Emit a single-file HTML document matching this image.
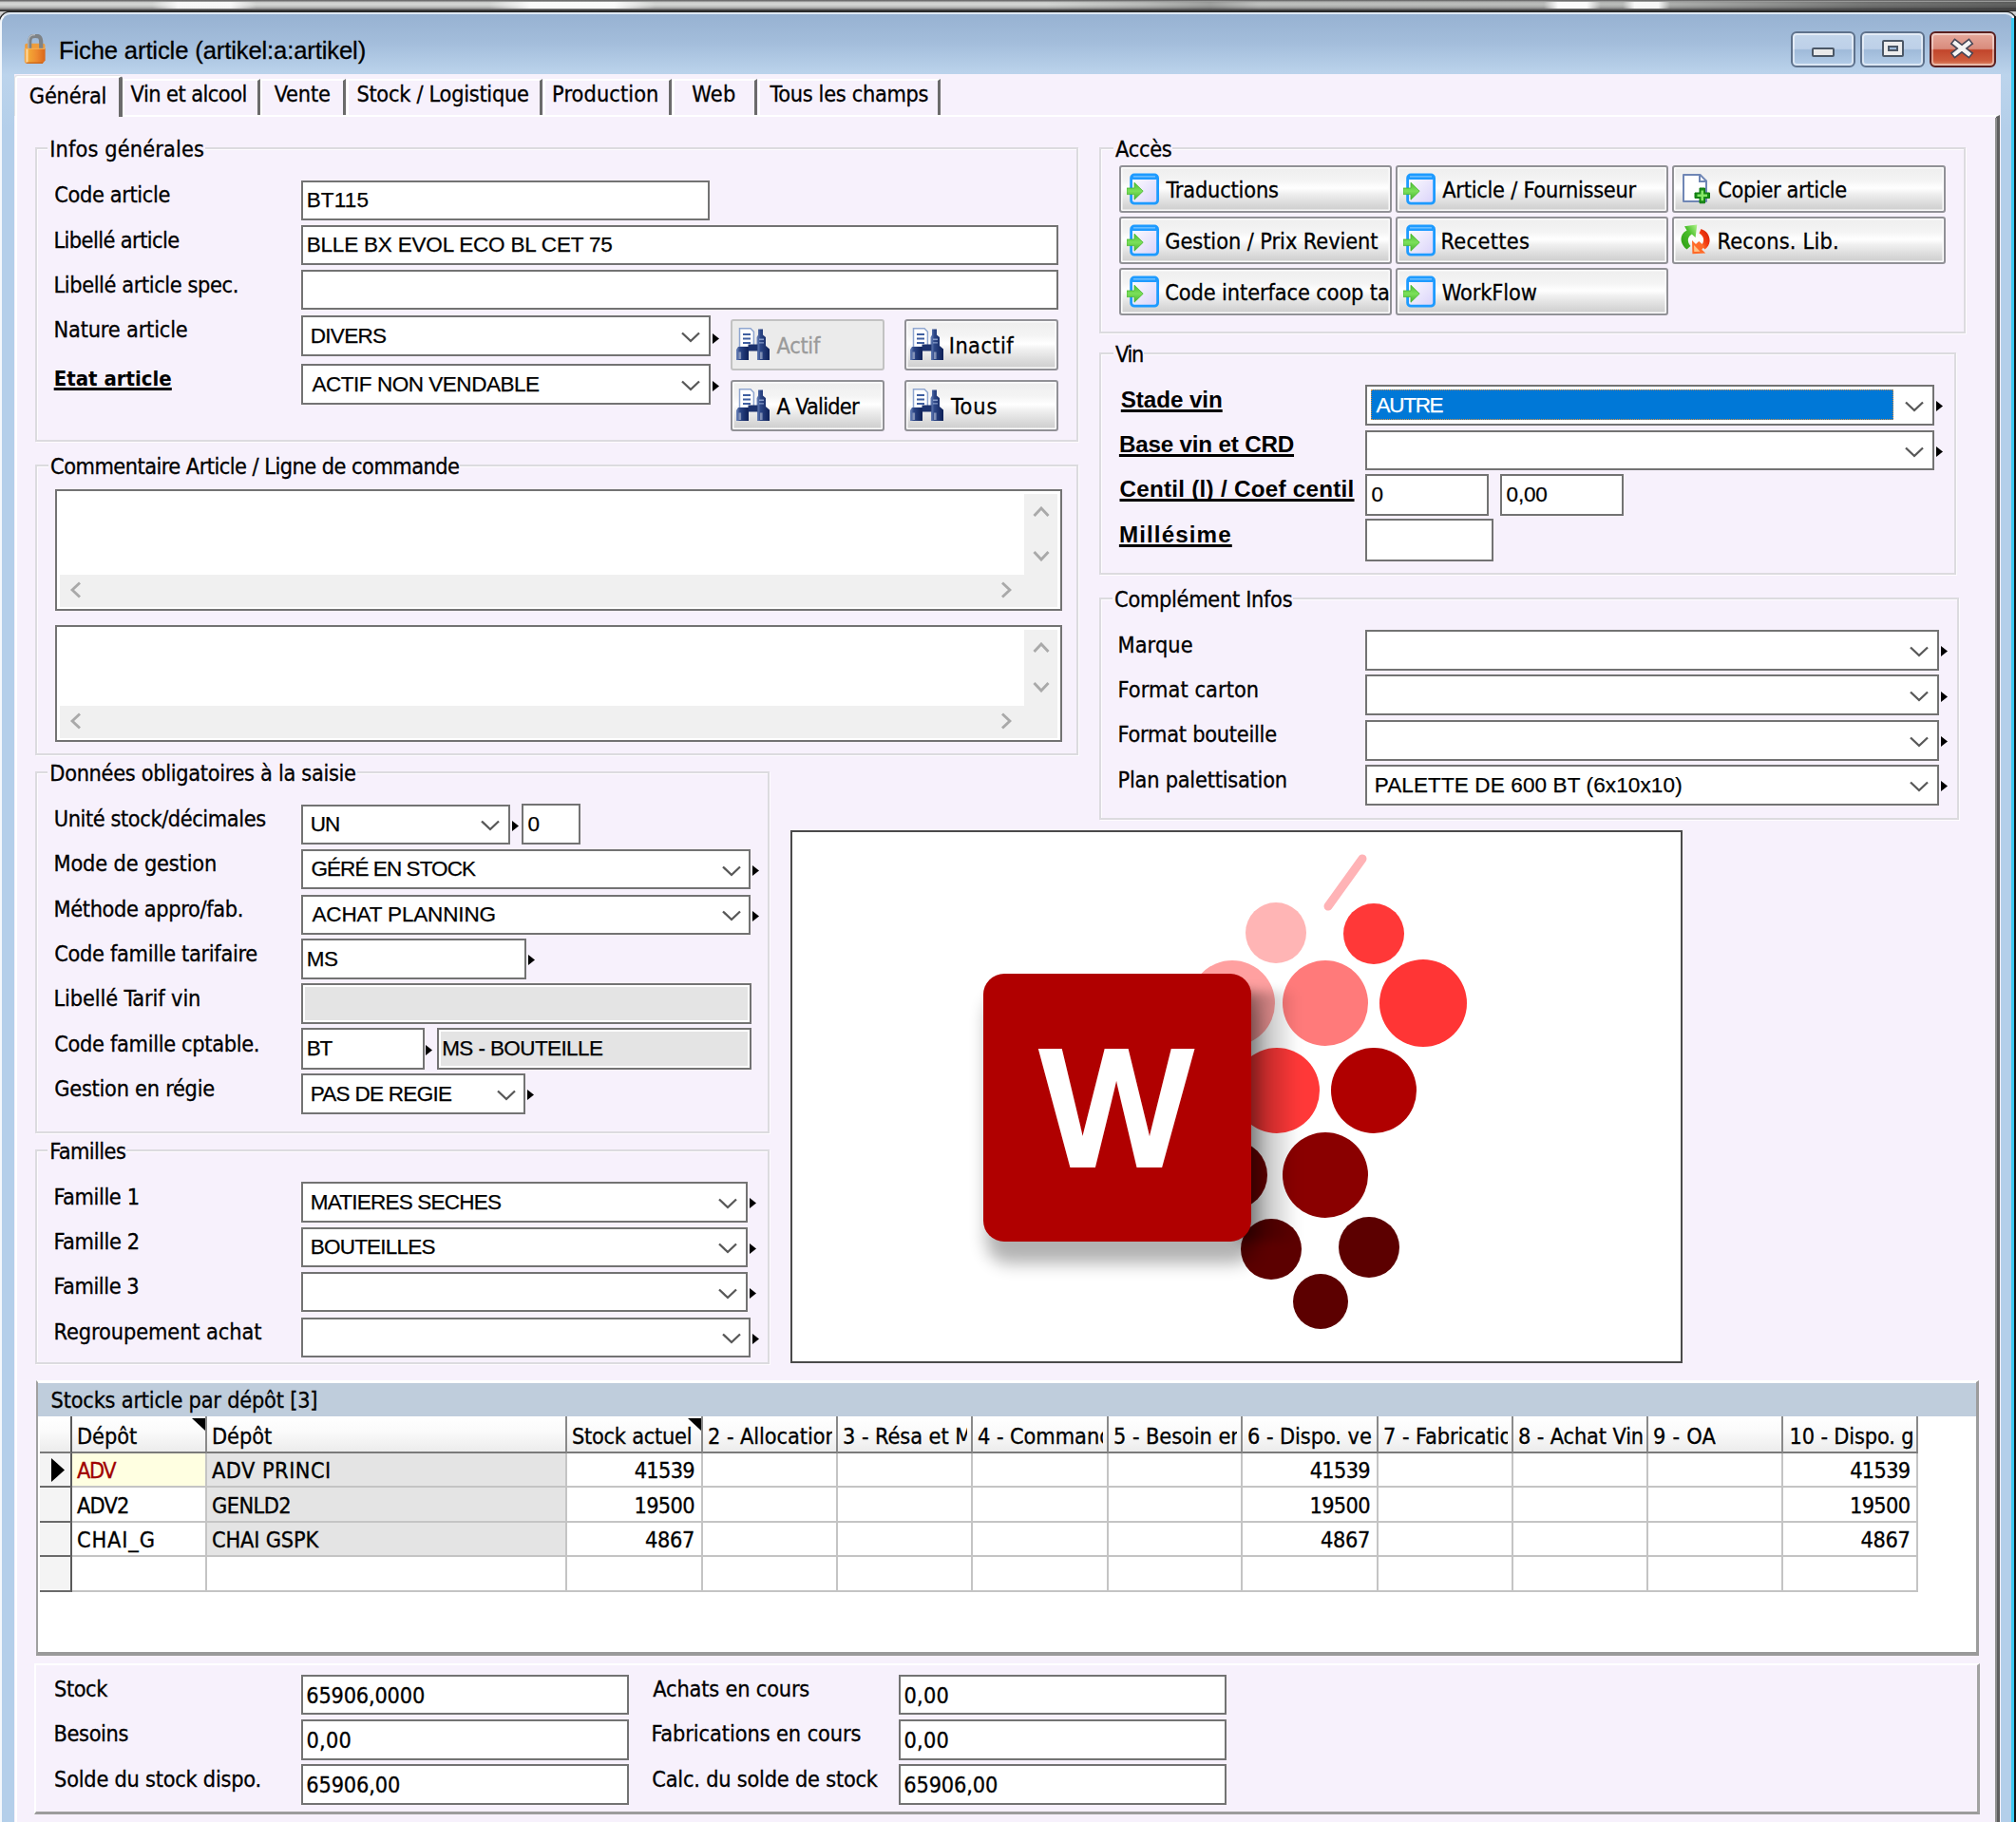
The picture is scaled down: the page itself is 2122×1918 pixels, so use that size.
<!DOCTYPE html>
<html><head><meta charset="utf-8"><title>Fiche article</title>
<style>
html,body{margin:0;padding:0;}
body{width:2122px;height:1918px;overflow:hidden;position:relative;background:#cfcfcf;font-family:'DejaVu Sans Condensed','DejaVu Sans','Liberation Sans',sans-serif;color:#000;}
div,span,svg{box-sizing:border-box;}
#root>div,#root>svg{position:absolute;}
.t{white-space:nowrap;color:#000;}
.inp{border:2px solid #737373;overflow:hidden;}
.iv{position:absolute;left:2.5px;top:0;font:22.5px 'Liberation Sans',sans-serif;white-space:nowrap;color:#000;-webkit-text-stroke:0.25px;}
.sel{position:absolute;background:#0078d7;outline:1px dotted #d89040;outline-offset:-1px;}
.chev{display:block;}
.grp{border:2px solid #dcdbdf;box-shadow:1px 1px 0 rgba(255,255,255,.8), inset 1px 1px 0 rgba(255,255,255,.8);}
.btn{border:2px solid #919196;border-radius:3px;background:linear-gradient(#eeeeee 0%,#f4f4f4 30%,#ffffff 48%,#f0f0f0 60%,#d9d9d9 85%,#cdcdcd 100%);box-shadow:inset 0 0 0 1.5px #fcfcfc;overflow:hidden;}
.btn.dis{background:#ebebeb;border-color:#c2c2c2;box-shadow:none;}
.btn.dis .bt{color:#9a9a9a;}
.bi{position:absolute;left:5.8px;top:50%;margin-top:-18px;height:36px;}
.bi svg{display:block;}
.bt{position:absolute;top:0;font:condensed 23.3px 'DejaVu Sans Condensed','DejaVu Sans','Liberation Sans',sans-serif;letter-spacing:-0.45px;-webkit-text-stroke:0.3px;white-space:nowrap;}
.a{display:block;}
</style></head><body><div id="root">
<div class="" style="left:0.0px;top:0.0px;width:2122.0px;height:12.0px;background:linear-gradient(#585858 0,#8a8a8a 1.2px,#cdcfcd 2.6px,#d4d6d4 4.5px,#c6c8c6 6.5px,#a6a6a6 8.5px,#5a5a5a 10.2px,#2a2a2a 11.3px);"></div>
<div class="" style="left:1100.0px;top:1.5px;width:1022.0px;height:8.0px;background:linear-gradient(90deg,rgba(0,0,0,0) 0,rgba(0,0,0,.12) 10%,rgba(0,0,0,.25) 17%,rgba(0,0,0,.1) 22%,rgba(0,0,0,.12) 60%,rgba(0,0,0,.45) 85%,rgba(0,0,0,.55) 100%);"></div>
<div class="" style="left:160.0px;top:1.5px;width:110.0px;height:7.0px;background:linear-gradient(90deg,rgba(255,255,255,0),rgba(255,255,255,0.85) 25%,rgba(255,255,255,0.85) 75%,rgba(255,255,255,0));"></div>
<div class="" style="left:515.0px;top:1.5px;width:175.0px;height:7.0px;background:linear-gradient(90deg,rgba(255,255,255,0),rgba(255,255,255,0.9) 25%,rgba(255,255,255,0.9) 75%,rgba(255,255,255,0));"></div>
<div class="" style="left:1625.0px;top:1.5px;width:60.0px;height:7.0px;background:linear-gradient(90deg,rgba(255,255,255,0),rgba(255,255,255,0.95) 25%,rgba(255,255,255,0.95) 75%,rgba(255,255,255,0));"></div>
<div class="" style="left:1708.0px;top:1.5px;width:50.0px;height:7.0px;background:linear-gradient(90deg,rgba(255,255,255,0),rgba(255,255,255,0.9) 25%,rgba(255,255,255,0.9) 75%,rgba(255,255,255,0));"></div>
<div class="" style="left:0.0px;top:12.5px;width:2122.0px;height:1917.5px;border-radius:11px 11px 0 0;background:linear-gradient(#97b2d2 0px,#a3bddb 30px,#bcd4ec 64px,#b4cfea 120px,#b4cfea 100%);border:2px solid #f4f8fc;border-top-color:#dfe9f4;box-shadow:0 0 0 1.5px #2a2a2a;"></div>
<div class="" style="left:2117.0px;top:19.0px;width:2.5px;height:1911.0px;background:#3ccaf2;"></div>
<div class="" style="left:2119.5px;top:17.0px;width:2.5px;height:1913.0px;background:#161616;"></div>
<div class="" style="left:15.0px;top:77.5px;width:2091.0px;height:1852.5px;background:#f7f1fc;"></div>
<svg style="left:25px;top:36px" width="24" height="32" viewBox="0 0 24 32"><defs><linearGradient id="lk" x1="0" y1="0" x2="1" y2="0"><stop offset="0" stop-color="#ee9428"/><stop offset=".12" stop-color="#ffd9a0"/><stop offset=".22" stop-color="#f3a634"/><stop offset=".6" stop-color="#ee8a30"/><stop offset="1" stop-color="#d8661a"/></linearGradient></defs>
<path d="M1.2 11.5 Q1.2 9.8 3 9.8 H20.5 Q22.4 9.8 22.4 11.5 V16 H1.2 Z" fill="#ef9d3c"/>
<path d="M6.2 17 V9 C6.2 2.5 8.5 1.8 12.2 1.8 C16 1.8 18.2 2.5 18.2 9 V17" fill="none" stroke="#7e8286" stroke-width="4.2" stroke-linejoin="round"/>
<path d="M4.9 15 V8.5 C4.9 1.5 8 0.6 12 0.6" fill="none" stroke="#b9bcbf" stroke-width="1.2"/>
<path d="M0.8 15 H22.6 V27.5 L20 30.7 H2.8 Q0.8 30.7 0.8 28.7 Z" fill="url(#lk)"/>
<path d="M1 15.3 H22.4" stroke="#f7b45c" stroke-width="1"/>
<path d="M2.5 30.2 H20" stroke="#c95f12" stroke-width="1.2"/></svg>
<div class="t" style="left:61.9px;top:33px;font:25.6px 'Liberation Sans',sans-serif;height:40px;line-height:40px;letter-spacing:-0.12px;color:#000;-webkit-text-stroke:0.3px #000">Fiche article (artikel:a:artikel)</div>
<div class="" style="left:1885.0px;top:33.0px;width:68.0px;height:37.5px;border:2px solid #5f728c;border-radius:6px;box-shadow:inset 0 0 0 2px rgba(255,255,255,.55);background:linear-gradient(#c4d6eb 0,#bdd0e8 48%,#9fbad9 52%,#b4cde8 100%);"><div style="position:absolute;left:20px;top:15px;width:24px;height:10px;background:#e9e9e9;border:2px solid #4b5766;border-radius:2px"></div></div>
<div class="" style="left:1958.0px;top:33.0px;width:68.0px;height:37.5px;border:2px solid #5f728c;border-radius:6px;box-shadow:inset 0 0 0 2px rgba(255,255,255,.55);background:linear-gradient(#c4d6eb 0,#bdd0e8 48%,#9fbad9 52%,#b4cde8 100%);"><div style="position:absolute;left:20.5px;top:6.5px;width:23px;height:18px;border:2px solid #4b5766;border-radius:2px;background:#ededed"><div style="position:absolute;left:4px;top:4px;right:4px;bottom:4px;border:2px solid #4b5766;background:#9fbad9"></div></div></div>
<div class="" style="left:2031.0px;top:33.0px;width:69.5px;height:37.5px;border:2px solid #5a2020;border-radius:6px;box-shadow:inset 0 0 0 2px rgba(255,255,255,.45);background:linear-gradient(#e6a99c 0,#d98c7d 48%,#c2452b 52%,#cd5c3e 85%,#dd8a6a 100%);"><svg style="position:absolute;left:19px;top:5px" width="26" height="22" viewBox="0 0 26 22"><path d="M6 5.5 L20 16.5 M20 5.5 L6 16.5" stroke="#474757" stroke-width="7.6" stroke-linecap="square"/><path d="M6 5.5 L20 16.5 M20 5.5 L6 16.5" stroke="#f4f4f4" stroke-width="4.4" stroke-linecap="square"/></svg></div>
<div class="" style="left:16.0px;top:120.5px;width:2088.5px;height:1809.5px;border-top:2.5px solid #fff;border-left:2px solid #fff;border-right:4px solid #5e5e5e;background:#f7f1fc;"></div>
<div class="" style="left:2100.3px;top:124.0px;width:1.7px;height:1806.0px;background:#8e8e8e;"></div>
<div class="" style="left:129.0px;top:83.0px;width:144.5px;height:38.0px;border-top:2px solid #fff;border-left:2px solid #fff;border-right:3px solid #6b6b6b;background:#f7f1fc;"><div class="t" style="position:absolute;left:6.6px;top:-4.5px;font:condensed 23.3px 'DejaVu Sans Condensed','DejaVu Sans','Liberation Sans',sans-serif;line-height:36px;letter-spacing:-0.53px;-webkit-text-stroke:0.3px #000">Vin et alcool</div></div>
<div class="" style="left:274.0px;top:83.0px;width:89.8px;height:38.0px;border-top:2px solid #fff;border-left:2px solid #fff;border-right:3px solid #6b6b6b;background:#f7f1fc;"><div class="t" style="position:absolute;left:12.7px;top:-4.5px;font:condensed 23.3px 'DejaVu Sans Condensed','DejaVu Sans','Liberation Sans',sans-serif;line-height:36px;letter-spacing:-0.14px;-webkit-text-stroke:0.3px #000">Vente</div></div>
<div class="" style="left:364.5px;top:83.0px;width:206.5px;height:38.0px;border-top:2px solid #fff;border-left:2px solid #fff;border-right:3px solid #6b6b6b;background:#f7f1fc;"><div class="t" style="position:absolute;left:8.9px;top:-4.5px;font:condensed 23.3px 'DejaVu Sans Condensed','DejaVu Sans','Liberation Sans',sans-serif;line-height:36px;letter-spacing:-0.27px;-webkit-text-stroke:0.3px #000">Stock / Logistique</div></div>
<div class="" style="left:571.5px;top:83.0px;width:135.8px;height:38.0px;border-top:2px solid #fff;border-left:2px solid #fff;border-right:3px solid #6b6b6b;background:#f7f1fc;"><div class="t" style="position:absolute;left:7.6px;top:-4.5px;font:condensed 23.3px 'DejaVu Sans Condensed','DejaVu Sans','Liberation Sans',sans-serif;line-height:36px;letter-spacing:0.10px;-webkit-text-stroke:0.3px #000">Production</div></div>
<div class="" style="left:707.8px;top:83.0px;width:89.5px;height:38.0px;border-top:2px solid #fff;border-left:2px solid #fff;border-right:3px solid #6b6b6b;background:#f7f1fc;"><div class="t" style="position:absolute;left:18.4px;top:-4.5px;font:condensed 23.3px 'DejaVu Sans Condensed','DejaVu Sans','Liberation Sans',sans-serif;line-height:36px;letter-spacing:0.28px;-webkit-text-stroke:0.3px #000">Web</div></div>
<div class="" style="left:797.8px;top:83.0px;width:192.6px;height:38.0px;border-top:2px solid #fff;border-left:2px solid #fff;border-right:3px solid #6b6b6b;background:#f7f1fc;"><div class="t" style="position:absolute;left:10.8px;top:-4.5px;font:condensed 23.3px 'DejaVu Sans Condensed','DejaVu Sans','Liberation Sans',sans-serif;line-height:36px;letter-spacing:-0.30px;-webkit-text-stroke:0.3px #000">Tous les champs</div></div>
<div class="" style="left:16.0px;top:79.5px;width:113.0px;height:43.5px;border-top:2px solid #fff;border-left:2px solid #fff;border-right:4px solid #6b6b6b;background:#f7f1fc;border-radius:3px 3px 0 0;box-shadow:-1px -1px 0 #e3e2e6;"><div class="t" style="position:absolute;left:12.8px;top:-0.7px;font:condensed 23.3px 'DejaVu Sans Condensed','DejaVu Sans','Liberation Sans',sans-serif;line-height:40px;letter-spacing:-0.16px;-webkit-text-stroke:0.3px #000">Général</div></div>
<div class="grp" style="left:36.5px;top:154.5px;width:1098.8px;height:310.0px;"></div>
<div class="t lg" style="left:50.3px;top:136.5px;font:condensed 23.3px 'DejaVu Sans Condensed','DejaVu Sans','Liberation Sans',sans-serif;height:40px;line-height:40px;letter-spacing:0.13px;-webkit-text-stroke:0.3px #000;padding:0 1px 0 2px;background:linear-gradient(transparent 13px,#f7f1fc 13px,#f7f1fc 27px,transparent 27px)">Infos générales</div>
<div class="t" style="left:57.3px;top:185.0px;font:condensed 23.3px 'DejaVu Sans Condensed','DejaVu Sans','Liberation Sans',sans-serif;letter-spacing:-0.37px;-webkit-text-stroke:0.3px #000;height:40px;line-height:40px;">Code article</div>
<div class="inp" style="left:317.0px;top:189.5px;width:430.3px;height:42.3px;background:#fff;"><span class="iv" style="line-height:38.8px;letter-spacing:0.17px;left:3.7px">BT115</span></div>
<div class="t" style="left:56.5px;top:232.5px;font:condensed 23.3px 'DejaVu Sans Condensed','DejaVu Sans','Liberation Sans',sans-serif;letter-spacing:-0.57px;-webkit-text-stroke:0.3px #000;height:40px;line-height:40px;">Libellé article</div>
<div class="inp" style="left:317.0px;top:237.0px;width:797.3px;height:42.3px;background:#fff;"><span class="iv" style="line-height:38.8px;letter-spacing:-0.19px;left:3.7px">BLLE BX EVOL ECO BL CET 75</span></div>
<div class="t" style="left:56.5px;top:280.0px;font:condensed 23.3px 'DejaVu Sans Condensed','DejaVu Sans','Liberation Sans',sans-serif;letter-spacing:-0.39px;-webkit-text-stroke:0.3px #000;height:40px;line-height:40px;">Libellé article spec.</div>
<div class="inp" style="left:317.0px;top:284.0px;width:797.3px;height:42.3px;background:#fff;"></div>
<div class="t" style="left:56.5px;top:327.0px;font:condensed 23.3px 'DejaVu Sans Condensed','DejaVu Sans','Liberation Sans',sans-serif;letter-spacing:-0.17px;-webkit-text-stroke:0.3px #000;height:40px;line-height:40px;">Nature article</div>
<div class="inp" style="left:317.0px;top:331.9px;width:430.5px;height:43.1px;background:#fff;"><span class="iv" style="line-height:39.6px;left:7.7px;letter-spacing:-0.68px">DIVERS</span><span style="position:absolute;right:7.5px;top:15.1px"><svg class="chev" width="22" height="12" viewBox="0 0 22 12"><path d="M2 1.5 L11 10 L20 1.5" fill="none" stroke="#585858" stroke-width="2.3"/></svg></span></div>
<svg class="a" style="left:749.7px;top:351.1px" width="7" height="11" viewBox="0 0 7 11"><path d="M0 0 L7 5.5 L0 11 Z" fill="#000"/></svg>
<div class="t" style="left:56.7px;top:379.0px;font:bold condensed 22px 'DejaVu Sans Condensed','DejaVu Sans','Liberation Sans',sans-serif;letter-spacing:0.01px;text-decoration:underline;text-decoration-skip-ink:none;text-decoration-thickness:2.7px;text-underline-offset:2.4px;height:40px;line-height:40px;">Etat article</div>
<div class="inp" style="left:317.0px;top:383.4px;width:430.5px;height:43.0px;background:#fff;"><span class="iv" style="line-height:39.5px;left:9.5px;letter-spacing:-0.47px">ACTIF NON VENDABLE</span><span style="position:absolute;right:7.5px;top:15.0px"><svg class="chev" width="22" height="12" viewBox="0 0 22 12"><path d="M2 1.5 L11 10 L20 1.5" fill="none" stroke="#585858" stroke-width="2.3"/></svg></span></div>
<svg class="a" style="left:749.7px;top:400.7px" width="7" height="11" viewBox="0 0 7 11"><path d="M0 0 L7 5.5 L0 11 Z" fill="#000"/></svg>
<div class="btn dis" style="left:768.5px;top:335.8px;width:162.6px;height:54.0px;"><span class="bi"><svg width="36" height="35" viewBox="0 0 36 35" style="margin-left:-1px"><defs><linearGradient id="gb" x1="0" y1="0" x2="1" y2="0"><stop offset="0" stop-color="#6f88bd"/><stop offset="0.3" stop-color="#2c4686"/><stop offset="1" stop-color="#0e2057"/></linearGradient></defs>
<path d="M3.5 0.8 H15 L18.4 4.2 V20.5 H3.5 Z" fill="#fff" stroke="#8fa6d0" stroke-width="1.5"/>
<path d="M7 7 H15 M7 11.5 H15 M7 16 H15" stroke="#3f5fa0" stroke-width="1.9"/>
<path d="M23 1.5 H28 V7.5 L31 10 V19 L35 22.5 V34 H22 V22 L21.5 19 V10 L23 7.5 Z" fill="url(#gb)"/>
<path d="M2 20 H13 V34 H0 V23 Z" fill="url(#gb)"/>
<rect x="12.5" y="17.5" width="10" height="7" fill="#1c326d"/>
<rect x="2.5" y="25.5" width="2.6" height="7.5" fill="#fff" opacity=".4"/>
<rect x="25" y="25.5" width="2.6" height="7.5" fill="#fff" opacity=".4"/>
<rect x="24" y="11.5" width="5" height="1.6" fill="#9fb2da" opacity=".8"/><rect x="24" y="15" width="5" height="1.6" fill="#9fb2da" opacity=".6"/></svg></span><span class="bt" style="left:47.1px;line-height:52.5px;letter-spacing:-0.30px">Actif</span></div>
<div class="btn" style="left:951.5px;top:335.8px;width:162.6px;height:54.0px;"><span class="bi"><svg width="36" height="35" viewBox="0 0 36 35" style="margin-left:-1px"><defs><linearGradient id="gb" x1="0" y1="0" x2="1" y2="0"><stop offset="0" stop-color="#6f88bd"/><stop offset="0.3" stop-color="#2c4686"/><stop offset="1" stop-color="#0e2057"/></linearGradient></defs>
<path d="M3.5 0.8 H15 L18.4 4.2 V20.5 H3.5 Z" fill="#fff" stroke="#8fa6d0" stroke-width="1.5"/>
<path d="M7 7 H15 M7 11.5 H15 M7 16 H15" stroke="#3f5fa0" stroke-width="1.9"/>
<path d="M23 1.5 H28 V7.5 L31 10 V19 L35 22.5 V34 H22 V22 L21.5 19 V10 L23 7.5 Z" fill="url(#gb)"/>
<path d="M2 20 H13 V34 H0 V23 Z" fill="url(#gb)"/>
<rect x="12.5" y="17.5" width="10" height="7" fill="#1c326d"/>
<rect x="2.5" y="25.5" width="2.6" height="7.5" fill="#fff" opacity=".4"/>
<rect x="25" y="25.5" width="2.6" height="7.5" fill="#fff" opacity=".4"/>
<rect x="24" y="11.5" width="5" height="1.6" fill="#9fb2da" opacity=".8"/><rect x="24" y="15" width="5" height="1.6" fill="#9fb2da" opacity=".6"/></svg></span><span class="bt" style="left:45.3px;line-height:52.5px;letter-spacing:0.43px">Inactif</span></div>
<div class="btn" style="left:768.5px;top:400.1px;width:162.6px;height:54.3px;"><span class="bi"><svg width="36" height="35" viewBox="0 0 36 35" style="margin-left:-1px"><defs><linearGradient id="gb" x1="0" y1="0" x2="1" y2="0"><stop offset="0" stop-color="#6f88bd"/><stop offset="0.3" stop-color="#2c4686"/><stop offset="1" stop-color="#0e2057"/></linearGradient></defs>
<path d="M3.5 0.8 H15 L18.4 4.2 V20.5 H3.5 Z" fill="#fff" stroke="#8fa6d0" stroke-width="1.5"/>
<path d="M7 7 H15 M7 11.5 H15 M7 16 H15" stroke="#3f5fa0" stroke-width="1.9"/>
<path d="M23 1.5 H28 V7.5 L31 10 V19 L35 22.5 V34 H22 V22 L21.5 19 V10 L23 7.5 Z" fill="url(#gb)"/>
<path d="M2 20 H13 V34 H0 V23 Z" fill="url(#gb)"/>
<rect x="12.5" y="17.5" width="10" height="7" fill="#1c326d"/>
<rect x="2.5" y="25.5" width="2.6" height="7.5" fill="#fff" opacity=".4"/>
<rect x="25" y="25.5" width="2.6" height="7.5" fill="#fff" opacity=".4"/>
<rect x="24" y="11.5" width="5" height="1.6" fill="#9fb2da" opacity=".8"/><rect x="24" y="15" width="5" height="1.6" fill="#9fb2da" opacity=".6"/></svg></span><span class="bt" style="left:47.1px;line-height:52.8px;letter-spacing:-0.72px">A Valider</span></div>
<div class="btn" style="left:951.5px;top:400.1px;width:162.6px;height:54.3px;"><span class="bi"><svg width="36" height="35" viewBox="0 0 36 35" style="margin-left:-1px"><defs><linearGradient id="gb" x1="0" y1="0" x2="1" y2="0"><stop offset="0" stop-color="#6f88bd"/><stop offset="0.3" stop-color="#2c4686"/><stop offset="1" stop-color="#0e2057"/></linearGradient></defs>
<path d="M3.5 0.8 H15 L18.4 4.2 V20.5 H3.5 Z" fill="#fff" stroke="#8fa6d0" stroke-width="1.5"/>
<path d="M7 7 H15 M7 11.5 H15 M7 16 H15" stroke="#3f5fa0" stroke-width="1.9"/>
<path d="M23 1.5 H28 V7.5 L31 10 V19 L35 22.5 V34 H22 V22 L21.5 19 V10 L23 7.5 Z" fill="url(#gb)"/>
<path d="M2 20 H13 V34 H0 V23 Z" fill="url(#gb)"/>
<rect x="12.5" y="17.5" width="10" height="7" fill="#1c326d"/>
<rect x="2.5" y="25.5" width="2.6" height="7.5" fill="#fff" opacity=".4"/>
<rect x="25" y="25.5" width="2.6" height="7.5" fill="#fff" opacity=".4"/>
<rect x="24" y="11.5" width="5" height="1.6" fill="#9fb2da" opacity=".8"/><rect x="24" y="15" width="5" height="1.6" fill="#9fb2da" opacity=".6"/></svg></span><span class="bt" style="left:47.4px;line-height:52.8px;letter-spacing:0.86px">Tous</span></div>
<div class="grp" style="left:36.5px;top:489.0px;width:1098.8px;height:305.5px;"></div>
<div class="t lg" style="left:51.1px;top:471.0px;font:condensed 23.3px 'DejaVu Sans Condensed','DejaVu Sans','Liberation Sans',sans-serif;height:40px;line-height:40px;letter-spacing:-0.52px;-webkit-text-stroke:0.3px #000;padding:0 1px 0 2px;background:linear-gradient(transparent 13px,#f7f1fc 13px,#f7f1fc 27px,transparent 27px)">Commentaire Article / Ligne de commande</div>
<div class="inp" style="left:58.0px;top:515.0px;width:1059.6px;height:128.2px;background:#fff;"><div style="position:absolute;left:3px;right:3px;bottom:2px;height:34px;background:#f0f0f0"></div>
<div style="position:absolute;right:3px;top:3px;bottom:36px;width:35px;background:#f0f0f0"></div>
<svg style="position:absolute;left:14px;bottom:11px" width="12" height="18" viewBox="0 0 12 18"><path d="M10 1.5 L2 9 L10 16.5" fill="none" stroke="#a9a9a9" stroke-width="2.9"/></svg>
<svg style="position:absolute;right:51px;bottom:11px" width="12" height="18" viewBox="0 0 12 18"><path d="M2 1.5 L10 9 L2 16.5" fill="none" stroke="#a9a9a9" stroke-width="2.9"/></svg>
<svg style="position:absolute;right:11px;top:16px" width="18" height="12" viewBox="0 0 18 12"><path d="M1.5 10 L9 2 L16.5 10" fill="none" stroke="#a9a9a9" stroke-width="2.9"/></svg>
<svg style="position:absolute;right:11px;bottom:50px" width="18" height="12" viewBox="0 0 18 12"><path d="M1.5 2 L9 10 L16.5 2" fill="none" stroke="#a9a9a9" stroke-width="2.9"/></svg></div>
<div class="inp" style="left:58.0px;top:657.6px;width:1059.6px;height:123.4px;background:#fff;"><div style="position:absolute;left:3px;right:3px;bottom:2px;height:34px;background:#f0f0f0"></div>
<div style="position:absolute;right:3px;top:3px;bottom:36px;width:35px;background:#f0f0f0"></div>
<svg style="position:absolute;left:14px;bottom:11px" width="12" height="18" viewBox="0 0 12 18"><path d="M10 1.5 L2 9 L10 16.5" fill="none" stroke="#a9a9a9" stroke-width="2.9"/></svg>
<svg style="position:absolute;right:51px;bottom:11px" width="12" height="18" viewBox="0 0 12 18"><path d="M2 1.5 L10 9 L2 16.5" fill="none" stroke="#a9a9a9" stroke-width="2.9"/></svg>
<svg style="position:absolute;right:11px;top:16px" width="18" height="12" viewBox="0 0 18 12"><path d="M1.5 10 L9 2 L16.5 10" fill="none" stroke="#a9a9a9" stroke-width="2.9"/></svg>
<svg style="position:absolute;right:11px;bottom:50px" width="18" height="12" viewBox="0 0 18 12"><path d="M1.5 2 L9 10 L16.5 2" fill="none" stroke="#a9a9a9" stroke-width="2.9"/></svg></div>
<div class="grp" style="left:36.5px;top:811.5px;width:773.8px;height:381.0px;"></div>
<div class="t lg" style="left:50.3px;top:793.5px;font:condensed 23.3px 'DejaVu Sans Condensed','DejaVu Sans','Liberation Sans',sans-serif;height:40px;line-height:40px;letter-spacing:-0.31px;-webkit-text-stroke:0.3px #000;padding:0 1px 0 2px;background:linear-gradient(transparent 13px,#f7f1fc 13px,#f7f1fc 27px,transparent 27px)">Données obligatoires à la saisie</div>
<div class="t" style="left:56.7px;top:841.5px;font:condensed 23.3px 'DejaVu Sans Condensed','DejaVu Sans','Liberation Sans',sans-serif;letter-spacing:-0.40px;-webkit-text-stroke:0.3px #000;height:40px;line-height:40px;">Unité stock/décimales</div>
<div class="inp" style="left:317.0px;top:846.7px;width:219.5px;height:42.3px;background:#fff;"><span class="iv" style="line-height:38.8px;left:7.8px;letter-spacing:-0.93px">UN</span><span style="position:absolute;right:7.5px;top:14.6px"><svg class="chev" width="22" height="12" viewBox="0 0 22 12"><path d="M2 1.5 L11 10 L20 1.5" fill="none" stroke="#585858" stroke-width="2.3"/></svg></span></div>
<svg class="a" style="left:538.7px;top:863.6px" width="7" height="11" viewBox="0 0 7 11"><path d="M0 0 L7 5.5 L0 11 Z" fill="#000"/></svg>
<div class="inp" style="left:549.0px;top:846.0px;width:61.8px;height:43.3px;background:#fff;"><span class="iv" style="line-height:39.8px;letter-spacing:0.00px;left:4.6px">0</span></div>
<div class="t" style="left:56.5px;top:889.0px;font:condensed 23.3px 'DejaVu Sans Condensed','DejaVu Sans','Liberation Sans',sans-serif;letter-spacing:-0.15px;-webkit-text-stroke:0.3px #000;height:40px;line-height:40px;">Mode de gestion</div>
<div class="inp" style="left:317.0px;top:894.2px;width:473.0px;height:42.3px;background:#fff;"><span class="iv" style="line-height:38.8px;left:8.4px;letter-spacing:-0.92px">GÉRÉ EN STOCK</span><span style="position:absolute;right:7.5px;top:14.6px"><svg class="chev" width="22" height="12" viewBox="0 0 22 12"><path d="M2 1.5 L11 10 L20 1.5" fill="none" stroke="#585858" stroke-width="2.3"/></svg></span></div>
<svg class="a" style="left:792.2px;top:911.1px" width="7" height="11" viewBox="0 0 7 11"><path d="M0 0 L7 5.5 L0 11 Z" fill="#000"/></svg>
<div class="t" style="left:56.5px;top:936.5px;font:condensed 23.3px 'DejaVu Sans Condensed','DejaVu Sans','Liberation Sans',sans-serif;letter-spacing:-0.35px;-webkit-text-stroke:0.3px #000;height:40px;line-height:40px;">Méthode appro/fab.</div>
<div class="inp" style="left:317.0px;top:941.7px;width:473.0px;height:42.3px;background:#fff;"><span class="iv" style="line-height:38.8px;left:9.5px;letter-spacing:-0.15px">ACHAT PLANNING</span><span style="position:absolute;right:7.5px;top:14.6px"><svg class="chev" width="22" height="12" viewBox="0 0 22 12"><path d="M2 1.5 L11 10 L20 1.5" fill="none" stroke="#585858" stroke-width="2.3"/></svg></span></div>
<svg class="a" style="left:792.2px;top:958.6px" width="7" height="11" viewBox="0 0 7 11"><path d="M0 0 L7 5.5 L0 11 Z" fill="#000"/></svg>
<div class="t" style="left:57.3px;top:984.0px;font:condensed 23.3px 'DejaVu Sans Condensed','DejaVu Sans','Liberation Sans',sans-serif;letter-spacing:-0.32px;-webkit-text-stroke:0.3px #000;height:40px;line-height:40px;">Code famille tarifaire</div>
<div class="inp" style="left:317.0px;top:987.5px;width:236.8px;height:43.8px;background:#fff;"><span class="iv" style="line-height:40.3px;letter-spacing:-0.37px;left:3.7px">MS</span></div>
<svg class="a" style="left:555.6px;top:1005.2px" width="7" height="11" viewBox="0 0 7 11"><path d="M0 0 L7 5.5 L0 11 Z" fill="#000"/></svg>
<div class="t" style="left:56.5px;top:1030.5px;font:condensed 23.3px 'DejaVu Sans Condensed','DejaVu Sans','Liberation Sans',sans-serif;letter-spacing:-0.11px;-webkit-text-stroke:0.3px #000;height:40px;line-height:40px;">Libellé Tarif vin</div>
<div class="inp" style="left:317.0px;top:1035.0px;width:473.8px;height:43.3px;background:#e4e4e4;box-shadow:inset 0 0 0 2px #fff;"></div>
<div class="t" style="left:57.3px;top:1078.5px;font:condensed 23.3px 'DejaVu Sans Condensed','DejaVu Sans','Liberation Sans',sans-serif;letter-spacing:-0.32px;-webkit-text-stroke:0.3px #000;height:40px;line-height:40px;">Code famille cptable.</div>
<div class="inp" style="left:317.0px;top:1082.0px;width:130.3px;height:43.8px;background:#fff;"><span class="iv" style="line-height:40.3px;letter-spacing:-1.09px;left:3.7px">BT</span></div>
<svg class="a" style="left:448.0px;top:1099.9px" width="7" height="11" viewBox="0 0 7 11"><path d="M0 0 L7 5.5 L0 11 Z" fill="#000"/></svg>
<div class="inp" style="left:459.5px;top:1082.0px;width:331.3px;height:43.8px;background:#e4e4e4;box-shadow:inset 0 0 0 2px #fff;"><span class="iv" style="line-height:40.3px;letter-spacing:-0.60px;left:3.7px">MS - BOUTEILLE</span></div>
<div class="t" style="left:57.3px;top:1126.0px;font:condensed 23.3px 'DejaVu Sans Condensed','DejaVu Sans','Liberation Sans',sans-serif;letter-spacing:-0.26px;-webkit-text-stroke:0.3px #000;height:40px;line-height:40px;">Gestion en régie</div>
<div class="inp" style="left:317.0px;top:1130.2px;width:236.0px;height:42.8px;background:#fff;"><span class="iv" style="line-height:39.3px;left:7.7px;letter-spacing:-0.71px">PAS DE REGIE</span><span style="position:absolute;right:7.5px;top:14.9px"><svg class="chev" width="22" height="12" viewBox="0 0 22 12"><path d="M2 1.5 L11 10 L20 1.5" fill="none" stroke="#585858" stroke-width="2.3"/></svg></span></div>
<svg class="a" style="left:555.2px;top:1147.4px" width="7" height="11" viewBox="0 0 7 11"><path d="M0 0 L7 5.5 L0 11 Z" fill="#000"/></svg>
<div class="grp" style="left:36.5px;top:1210.0px;width:773.8px;height:225.5px;"></div>
<div class="t lg" style="left:50.3px;top:1192.0px;font:condensed 23.3px 'DejaVu Sans Condensed','DejaVu Sans','Liberation Sans',sans-serif;height:40px;line-height:40px;letter-spacing:-0.56px;-webkit-text-stroke:0.3px #000;padding:0 1px 0 2px;background:linear-gradient(transparent 13px,#f7f1fc 13px,#f7f1fc 27px,transparent 27px)">Familles</div>
<div class="t" style="left:56.5px;top:1239.5px;font:condensed 23.3px 'DejaVu Sans Condensed','DejaVu Sans','Liberation Sans',sans-serif;letter-spacing:-0.38px;-webkit-text-stroke:0.3px #000;height:40px;line-height:40px;">Famille 1</div>
<div class="inp" style="left:317.0px;top:1244.2px;width:469.5px;height:42.8px;background:#fff;"><span class="iv" style="line-height:39.3px;left:7.7px;letter-spacing:-0.77px">MATIERES SECHES</span><span style="position:absolute;right:7.5px;top:14.9px"><svg class="chev" width="22" height="12" viewBox="0 0 22 12"><path d="M2 1.5 L11 10 L20 1.5" fill="none" stroke="#585858" stroke-width="2.3"/></svg></span></div>
<svg class="a" style="left:788.7px;top:1261.4px" width="7" height="11" viewBox="0 0 7 11"><path d="M0 0 L7 5.5 L0 11 Z" fill="#000"/></svg>
<div class="t" style="left:56.5px;top:1287.0px;font:condensed 23.3px 'DejaVu Sans Condensed','DejaVu Sans','Liberation Sans',sans-serif;letter-spacing:-0.36px;-webkit-text-stroke:0.3px #000;height:40px;line-height:40px;">Famille 2</div>
<div class="inp" style="left:317.0px;top:1291.7px;width:469.5px;height:42.3px;background:#fff;"><span class="iv" style="line-height:38.8px;left:7.7px;letter-spacing:-0.77px">BOUTEILLES</span><span style="position:absolute;right:7.5px;top:14.6px"><svg class="chev" width="22" height="12" viewBox="0 0 22 12"><path d="M2 1.5 L11 10 L20 1.5" fill="none" stroke="#585858" stroke-width="2.3"/></svg></span></div>
<svg class="a" style="left:788.7px;top:1308.6px" width="7" height="11" viewBox="0 0 7 11"><path d="M0 0 L7 5.5 L0 11 Z" fill="#000"/></svg>
<div class="t" style="left:56.5px;top:1334.0px;font:condensed 23.3px 'DejaVu Sans Condensed','DejaVu Sans','Liberation Sans',sans-serif;letter-spacing:-0.42px;-webkit-text-stroke:0.3px #000;height:40px;line-height:40px;">Famille 3</div>
<div class="inp" style="left:317.0px;top:1339.2px;width:469.5px;height:42.3px;background:#fff;"><span style="position:absolute;right:7.5px;top:14.6px"><svg class="chev" width="22" height="12" viewBox="0 0 22 12"><path d="M2 1.5 L11 10 L20 1.5" fill="none" stroke="#585858" stroke-width="2.3"/></svg></span></div>
<svg class="a" style="left:788.7px;top:1356.1px" width="7" height="11" viewBox="0 0 7 11"><path d="M0 0 L7 5.5 L0 11 Z" fill="#000"/></svg>
<div class="t" style="left:56.5px;top:1381.5px;font:condensed 23.3px 'DejaVu Sans Condensed','DejaVu Sans','Liberation Sans',sans-serif;letter-spacing:-0.08px;-webkit-text-stroke:0.3px #000;height:40px;line-height:40px;">Regroupement achat</div>
<div class="inp" style="left:317.0px;top:1386.7px;width:473.0px;height:42.3px;background:#fff;"><span style="position:absolute;right:7.5px;top:14.6px"><svg class="chev" width="22" height="12" viewBox="0 0 22 12"><path d="M2 1.5 L11 10 L20 1.5" fill="none" stroke="#585858" stroke-width="2.3"/></svg></span></div>
<svg class="a" style="left:792.2px;top:1403.6px" width="7" height="11" viewBox="0 0 7 11"><path d="M0 0 L7 5.5 L0 11 Z" fill="#000"/></svg>
<div class="grp" style="left:1156.5px;top:154.5px;width:912.3px;height:196.0px;"></div>
<div class="t lg" style="left:1172.1px;top:136.5px;font:condensed 23.3px 'DejaVu Sans Condensed','DejaVu Sans','Liberation Sans',sans-serif;height:40px;line-height:40px;letter-spacing:-0.28px;-webkit-text-stroke:0.3px #000;padding:0 1px 0 2px;background:linear-gradient(transparent 13px,#f7f1fc 13px,#f7f1fc 27px,transparent 27px)">Accès</div>
<div class="btn" style="left:1178.2px;top:174.0px;width:286.6px;height:49.8px;"><span class="bi"><svg width="36" height="36" viewBox="0 0 36 36"><defs><linearGradient id="gf" x1="0" y1="0" x2="1" y2="1"><stop offset="0" stop-color="#fff"/><stop offset="1" stop-color="#d9d2fa"/></linearGradient><linearGradient id="ga" x1="0" y1="0" x2="0" y2="1"><stop offset="0" stop-color="#4fbf36"/><stop offset=".5" stop-color="#7be05a"/><stop offset="1" stop-color="#45b02e"/></linearGradient></defs>
<rect x="4.6" y="3" width="28" height="30.2" rx="3.5" fill="url(#gf)" stroke="#1e9bff" stroke-width="2.8"/>
<rect x="4.6" y="3" width="28" height="5" rx="2" fill="#1e9bff"/>
<rect x="7" y="4.2" width="23" height="1.3" fill="#7cc6ff"/>
<path d="M0 17 H8 V11.2 L17.2 20.2 L8 29.2 V23.6 H0 Z" fill="url(#ga)" stroke="#4ab834" stroke-width=".8"/></svg></span><span class="bt" style="left:47.4px;line-height:48.3px;letter-spacing:-0.16px">Traductions</span></div>
<div class="btn" style="left:1469.2px;top:174.0px;width:286.6px;height:49.8px;"><span class="bi"><svg width="36" height="36" viewBox="0 0 36 36"><defs><linearGradient id="gf" x1="0" y1="0" x2="1" y2="1"><stop offset="0" stop-color="#fff"/><stop offset="1" stop-color="#d9d2fa"/></linearGradient><linearGradient id="ga" x1="0" y1="0" x2="0" y2="1"><stop offset="0" stop-color="#4fbf36"/><stop offset=".5" stop-color="#7be05a"/><stop offset="1" stop-color="#45b02e"/></linearGradient></defs>
<rect x="4.6" y="3" width="28" height="30.2" rx="3.5" fill="url(#gf)" stroke="#1e9bff" stroke-width="2.8"/>
<rect x="4.6" y="3" width="28" height="5" rx="2" fill="#1e9bff"/>
<rect x="7" y="4.2" width="23" height="1.3" fill="#7cc6ff"/>
<path d="M0 17 H8 V11.2 L17.2 20.2 L8 29.2 V23.6 H0 Z" fill="url(#ga)" stroke="#4ab834" stroke-width=".8"/></svg></span><span class="bt" style="left:47.1px;line-height:48.3px;letter-spacing:-0.25px">Article / Fournisseur</span></div>
<div class="btn" style="left:1760.2px;top:174.0px;width:287.6px;height:49.8px;"><span class="bi"><svg width="36" height="36" viewBox="0 0 36 36">
<path d="M4 3 H21.5 L28 9.5 V31 H4 Z" fill="#fff" stroke="#6f86b5" stroke-width="2" stroke-linejoin="round"/>
<path d="M21 3.5 V10 H27.5" fill="none" stroke="#6f86b5" stroke-width="2"/>
<path d="M21 17 H26.5 V22 H31.5 V27.5 H26.5 V32.8 H21 V27.5 H16 V22 H21 Z" fill="#178a17" stroke="#0f7a10" stroke-width="1" stroke-linejoin="round"/>
<path d="M23.75 19.5 V30.3 M18.5 24.75 H29" stroke="#86e868" stroke-width="2.6"/></svg></span><span class="bt" style="left:46.1px;line-height:48.3px;letter-spacing:-0.35px">Copier article</span></div>
<div class="btn" style="left:1178.2px;top:228.0px;width:286.6px;height:49.8px;"><span class="bi"><svg width="36" height="36" viewBox="0 0 36 36"><defs><linearGradient id="gf" x1="0" y1="0" x2="1" y2="1"><stop offset="0" stop-color="#fff"/><stop offset="1" stop-color="#d9d2fa"/></linearGradient><linearGradient id="ga" x1="0" y1="0" x2="0" y2="1"><stop offset="0" stop-color="#4fbf36"/><stop offset=".5" stop-color="#7be05a"/><stop offset="1" stop-color="#45b02e"/></linearGradient></defs>
<rect x="4.6" y="3" width="28" height="30.2" rx="3.5" fill="url(#gf)" stroke="#1e9bff" stroke-width="2.8"/>
<rect x="4.6" y="3" width="28" height="5" rx="2" fill="#1e9bff"/>
<rect x="7" y="4.2" width="23" height="1.3" fill="#7cc6ff"/>
<path d="M0 17 H8 V11.2 L17.2 20.2 L8 29.2 V23.6 H0 Z" fill="url(#ga)" stroke="#4ab834" stroke-width=".8"/></svg></span><span class="bt" style="left:46.1px;line-height:48.3px;letter-spacing:-0.05px">Gestion / Prix Revient</span></div>
<div class="btn" style="left:1469.2px;top:228.0px;width:286.6px;height:49.8px;"><span class="bi"><svg width="36" height="36" viewBox="0 0 36 36"><defs><linearGradient id="gf" x1="0" y1="0" x2="1" y2="1"><stop offset="0" stop-color="#fff"/><stop offset="1" stop-color="#d9d2fa"/></linearGradient><linearGradient id="ga" x1="0" y1="0" x2="0" y2="1"><stop offset="0" stop-color="#4fbf36"/><stop offset=".5" stop-color="#7be05a"/><stop offset="1" stop-color="#45b02e"/></linearGradient></defs>
<rect x="4.6" y="3" width="28" height="30.2" rx="3.5" fill="url(#gf)" stroke="#1e9bff" stroke-width="2.8"/>
<rect x="4.6" y="3" width="28" height="5" rx="2" fill="#1e9bff"/>
<rect x="7" y="4.2" width="23" height="1.3" fill="#7cc6ff"/>
<path d="M0 17 H8 V11.2 L17.2 20.2 L8 29.2 V23.6 H0 Z" fill="url(#ga)" stroke="#4ab834" stroke-width=".8"/></svg></span><span class="bt" style="left:45.3px;line-height:48.3px;letter-spacing:0.35px">Recettes</span></div>
<div class="btn" style="left:1760.2px;top:228.0px;width:287.6px;height:49.8px;"><span class="bi"><svg width="36" height="36" viewBox="0 0 36 36"><defs>
<linearGradient id="gg" x1="0" y1="1" x2="1" y2="0"><stop offset="0" stop-color="#2c9a12"/><stop offset=".6" stop-color="#4cc02c"/><stop offset="1" stop-color="#b4f590"/></linearGradient>
<linearGradient id="gr" x1="1" y1="0" x2="0" y2="1"><stop offset="0" stop-color="#c81a08"/><stop offset=".5" stop-color="#f23a10"/><stop offset="1" stop-color="#ff8a3a"/></linearGradient></defs>
<path d="M7.5 27.5 C0 22 -1 12 7.5 7.5 L5 3.2 L18.3 1.4 L16.6 15 L12.8 11.4 C8 14.5 7.5 19.5 11.5 24 Z" fill="url(#gg)"/>
<path d="M22.5 6 C33 9.5 34.5 22 26.5 27.5 L22.5 23.5 C26.5 19.5 26 13.5 20.5 10.5 Z" fill="url(#gr)"/>
<path d="M13 18 L13.4 32.2 L27.2 31.6 L23.2 27.8 L26.2 24.2 L20.2 19 L17 22 Z" fill="#ff6a28"/>
<path d="M15 23 L15.3 30 L21.5 29.7 Z" fill="#ffd9a0" opacity=".8"/></svg></span><span class="bt" style="left:45.3px;line-height:48.3px;letter-spacing:0.23px">Recons. Lib.</span></div>
<div class="btn" style="left:1178.2px;top:282.0px;width:286.6px;height:49.8px;"><span class="bi"><svg width="36" height="36" viewBox="0 0 36 36"><defs><linearGradient id="gf" x1="0" y1="0" x2="1" y2="1"><stop offset="0" stop-color="#fff"/><stop offset="1" stop-color="#d9d2fa"/></linearGradient><linearGradient id="ga" x1="0" y1="0" x2="0" y2="1"><stop offset="0" stop-color="#4fbf36"/><stop offset=".5" stop-color="#7be05a"/><stop offset="1" stop-color="#45b02e"/></linearGradient></defs>
<rect x="4.6" y="3" width="28" height="30.2" rx="3.5" fill="url(#gf)" stroke="#1e9bff" stroke-width="2.8"/>
<rect x="4.6" y="3" width="28" height="5" rx="2" fill="#1e9bff"/>
<rect x="7" y="4.2" width="23" height="1.3" fill="#7cc6ff"/>
<path d="M0 17 H8 V11.2 L17.2 20.2 L8 29.2 V23.6 H0 Z" fill="url(#ga)" stroke="#4ab834" stroke-width=".8"/></svg></span><span class="bt" style="left:46.1px;line-height:48.3px;letter-spacing:-0.10px">Code interface coop ta</span></div>
<div class="btn" style="left:1469.2px;top:282.0px;width:286.6px;height:49.8px;"><span class="bi"><svg width="36" height="36" viewBox="0 0 36 36"><defs><linearGradient id="gf" x1="0" y1="0" x2="1" y2="1"><stop offset="0" stop-color="#fff"/><stop offset="1" stop-color="#d9d2fa"/></linearGradient><linearGradient id="ga" x1="0" y1="0" x2="0" y2="1"><stop offset="0" stop-color="#4fbf36"/><stop offset=".5" stop-color="#7be05a"/><stop offset="1" stop-color="#45b02e"/></linearGradient></defs>
<rect x="4.6" y="3" width="28" height="30.2" rx="3.5" fill="url(#gf)" stroke="#1e9bff" stroke-width="2.8"/>
<rect x="4.6" y="3" width="28" height="5" rx="2" fill="#1e9bff"/>
<rect x="7" y="4.2" width="23" height="1.3" fill="#7cc6ff"/>
<path d="M0 17 H8 V11.2 L17.2 20.2 L8 29.2 V23.6 H0 Z" fill="url(#ga)" stroke="#4ab834" stroke-width=".8"/></svg></span><span class="bt" style="left:46.6px;line-height:48.3px;letter-spacing:-0.10px">WorkFlow</span></div>
<div class="grp" style="left:1156.5px;top:371.0px;width:902.8px;height:233.5px;"></div>
<div class="t lg" style="left:1172.1px;top:353.0px;font:condensed 23.3px 'DejaVu Sans Condensed','DejaVu Sans','Liberation Sans',sans-serif;height:40px;line-height:40px;letter-spacing:-1.40px;-webkit-text-stroke:0.3px #000;padding:0 1px 0 2px;background:linear-gradient(transparent 13px,#f7f1fc 13px,#f7f1fc 27px,transparent 27px)">Vin</div>
<div class="t" style="left:1179.8px;top:400.9px;font:bold 24.2px 'Liberation Sans',sans-serif;letter-spacing:-0.07px;text-decoration:underline;text-decoration-skip-ink:none;text-decoration-thickness:2.6px;text-underline-offset:2.3px;height:40px;line-height:40px;">Stade vin</div>
<div class="inp" style="left:1437.0px;top:404.7px;width:598.5px;height:43.3px;background:#fff;"><div class="sel" style="left:3.5px;top:3.5px;right:41px;bottom:3.5px"></div><span class="iv" style="line-height:39.8px;color:#fff;left:9.5px;letter-spacing:-1.29px">AUTRE</span><span style="position:absolute;right:7.5px;top:15.2px"><svg class="chev" width="22" height="12" viewBox="0 0 22 12"><path d="M2 1.5 L11 10 L20 1.5" fill="none" stroke="#585858" stroke-width="2.3"/></svg></span></div>
<svg class="a" style="left:2037.7px;top:422.2px" width="7" height="11" viewBox="0 0 7 11"><path d="M0 0 L7 5.5 L0 11 Z" fill="#000"/></svg>
<div class="t" style="left:1177.9px;top:447.9px;font:bold 24.2px 'Liberation Sans',sans-serif;letter-spacing:-0.18px;text-decoration:underline;text-decoration-skip-ink:none;text-decoration-thickness:2.6px;text-underline-offset:2.3px;height:40px;line-height:40px;">Base vin et CRD</div>
<div class="inp" style="left:1437.0px;top:452.7px;width:598.5px;height:42.8px;background:#fff;"><span style="position:absolute;right:7.5px;top:14.9px"><svg class="chev" width="22" height="12" viewBox="0 0 22 12"><path d="M2 1.5 L11 10 L20 1.5" fill="none" stroke="#585858" stroke-width="2.3"/></svg></span></div>
<svg class="a" style="left:2037.7px;top:469.9px" width="7" height="11" viewBox="0 0 7 11"><path d="M0 0 L7 5.5 L0 11 Z" fill="#000"/></svg>
<div class="t" style="left:1178.5px;top:495.4px;font:bold 24.2px 'Liberation Sans',sans-serif;letter-spacing:0.27px;text-decoration:underline;text-decoration-skip-ink:none;text-decoration-thickness:2.6px;text-underline-offset:2.3px;height:40px;line-height:40px;">Centil (l) / Coef centil</div>
<div class="inp" style="left:1437.0px;top:499.0px;width:130.3px;height:44.3px;background:#fff;"><span class="iv" style="line-height:40.8px;letter-spacing:0.00px;left:4.6px">0</span></div>
<div class="inp" style="left:1579.0px;top:499.0px;width:130.3px;height:44.3px;background:#fff;"><span class="iv" style="line-height:40.8px;letter-spacing:-0.18px;left:4.6px">0,00</span></div>
<div class="t" style="left:1177.9px;top:542.9px;font:bold 24.2px 'Liberation Sans',sans-serif;letter-spacing:1.11px;text-decoration:underline;text-decoration-skip-ink:none;text-decoration-thickness:2.6px;text-underline-offset:2.3px;height:40px;line-height:40px;">Millésime</div>
<div class="inp" style="left:1437.0px;top:546.0px;width:134.8px;height:44.8px;background:#fff;"></div>
<div class="grp" style="left:1156.5px;top:629.0px;width:905.8px;height:233.8px;"></div>
<div class="t lg" style="left:1171.1px;top:611.0px;font:condensed 23.3px 'DejaVu Sans Condensed','DejaVu Sans','Liberation Sans',sans-serif;height:40px;line-height:40px;letter-spacing:-0.30px;-webkit-text-stroke:0.3px #000;padding:0 1px 0 2px;background:linear-gradient(transparent 13px,#f7f1fc 13px,#f7f1fc 27px,transparent 27px)">Complément Infos</div>
<div class="t" style="left:1176.5px;top:659.0px;font:condensed 23.3px 'DejaVu Sans Condensed','DejaVu Sans','Liberation Sans',sans-serif;letter-spacing:0.09px;-webkit-text-stroke:0.3px #000;height:40px;line-height:40px;">Marque</div>
<div class="inp" style="left:1437.0px;top:662.7px;width:603.5px;height:43.3px;background:#fff;"><span style="position:absolute;right:7.5px;top:15.1px"><svg class="chev" width="22" height="12" viewBox="0 0 22 12"><path d="M2 1.5 L11 10 L20 1.5" fill="none" stroke="#585858" stroke-width="2.3"/></svg></span></div>
<svg class="a" style="left:2042.7px;top:680.1px" width="7" height="11" viewBox="0 0 7 11"><path d="M0 0 L7 5.5 L0 11 Z" fill="#000"/></svg>
<div class="t" style="left:1176.5px;top:706.0px;font:condensed 23.3px 'DejaVu Sans Condensed','DejaVu Sans','Liberation Sans',sans-serif;letter-spacing:0.08px;-webkit-text-stroke:0.3px #000;height:40px;line-height:40px;">Format carton</div>
<div class="inp" style="left:1437.0px;top:710.2px;width:603.5px;height:43.3px;background:#fff;"><span style="position:absolute;right:7.5px;top:15.1px"><svg class="chev" width="22" height="12" viewBox="0 0 22 12"><path d="M2 1.5 L11 10 L20 1.5" fill="none" stroke="#585858" stroke-width="2.3"/></svg></span></div>
<svg class="a" style="left:2042.7px;top:727.6px" width="7" height="11" viewBox="0 0 7 11"><path d="M0 0 L7 5.5 L0 11 Z" fill="#000"/></svg>
<div class="t" style="left:1176.5px;top:752.5px;font:condensed 23.3px 'DejaVu Sans Condensed','DejaVu Sans','Liberation Sans',sans-serif;letter-spacing:-0.25px;-webkit-text-stroke:0.3px #000;height:40px;line-height:40px;">Format bouteille</div>
<div class="inp" style="left:1437.0px;top:757.7px;width:603.5px;height:43.3px;background:#fff;"><span style="position:absolute;right:7.5px;top:15.1px"><svg class="chev" width="22" height="12" viewBox="0 0 22 12"><path d="M2 1.5 L11 10 L20 1.5" fill="none" stroke="#585858" stroke-width="2.3"/></svg></span></div>
<svg class="a" style="left:2042.7px;top:775.1px" width="7" height="11" viewBox="0 0 7 11"><path d="M0 0 L7 5.5 L0 11 Z" fill="#000"/></svg>
<div class="t" style="left:1176.5px;top:801.0px;font:condensed 23.3px 'DejaVu Sans Condensed','DejaVu Sans','Liberation Sans',sans-serif;letter-spacing:-0.22px;-webkit-text-stroke:0.3px #000;height:40px;line-height:40px;">Plan palettisation</div>
<div class="inp" style="left:1437.0px;top:804.7px;width:603.5px;height:43.3px;background:#fff;"><span class="iv" style="line-height:39.8px;left:7.7px;letter-spacing:0.13px">PALETTE DE 600 BT (6x10x10)</span><span style="position:absolute;right:7.5px;top:15.1px"><svg class="chev" width="22" height="12" viewBox="0 0 22 12"><path d="M2 1.5 L11 10 L20 1.5" fill="none" stroke="#585858" stroke-width="2.3"/></svg></span></div>
<svg class="a" style="left:2042.7px;top:822.1px" width="7" height="11" viewBox="0 0 7 11"><path d="M0 0 L7 5.5 L0 11 Z" fill="#000"/></svg>
<div class="" style="left:832.0px;top:873.5px;width:939.0px;height:561.0px;background:#fff;border:2px solid #4a4a4a;"><svg width="934" height="556" viewBox="0 0 934 556" style="position:absolute;left:0;top:0">
<defs>
<linearGradient id="fade" x1="0" y1="0" x2="1" y2="0"><stop offset="0" stop-color="#000" stop-opacity=".42"/><stop offset="1" stop-color="#000" stop-opacity="0"/></linearGradient>
<filter id="bl" x="-20%" y="-20%" width="140%" height="140%"><feGaussianBlur stdDeviation="9"/></filter>
<filter id="bl2" x="-30%" y="-20%" width="160%" height="140%"><feGaussianBlur stdDeviation="6"/></filter>
</defs>
<line x1="564" y1="78" x2="600" y2="28" stroke="#ffb3b6" stroke-width="9" stroke-linecap="round"/>
<circle cx="509" cy="106" r="32" fill="#ffb5b5"/>
<circle cx="612" cy="107" r="32" fill="#ff3838"/>
<circle cx="463" cy="180" r="45" fill="#ffa0a0"/>
<circle cx="561" cy="180" r="45" fill="#ff7a7a"/>
<circle cx="664" cy="180" r="46" fill="#ff3535"/>
<circle cx="510" cy="272" r="45" fill="#ff3838"/>
<circle cx="612" cy="272" r="45" fill="#b00000"/>
<circle cx="464" cy="361" r="36" fill="#6e0000"/>
<circle cx="561" cy="361" r="45" fill="#8a0000"/>
<circle cx="504" cy="439" r="32" fill="#5c0000"/>
<circle cx="607" cy="437" r="32" fill="#5c0000"/>
<circle cx="556" cy="494" r="29" fill="#5c0000"/>
<rect x="200" y="158" width="284" height="284" rx="24" fill="#000" opacity=".30" filter="url(#bl)" transform="translate(4,12)"/>
<rect x="470" y="168" width="62" height="262" fill="url(#fade)" filter="url(#bl2)"/>
<rect x="201" y="149" width="282" height="282" rx="22" fill="#b00000"/>
</svg><div style="position:absolute;left:241px;top:156px;width:200px;text-align:center;font:224px 'Liberation Sans',sans-serif;line-height:233px;height:282px;color:#fff;-webkit-text-stroke:6px #fff;transform:scaleX(0.965);transform-origin:50% 50%">w</div></div>
<div class="" style="left:38.0px;top:1453.0px;width:2045.0px;height:290.0px;background:#fff;border-top:2.5px solid #fff;border-left:2px solid #a0a0a0;border-right:3.5px solid #9c9c9c;border-bottom:4px solid #9a9a9a;"></div>
<div class="" style="left:40.0px;top:1455.5px;width:2039.5px;height:35.0px;background:#bfcddc;"></div>
<div class="t" style="left:53.6px;top:1454px;font:condensed 23.3px 'DejaVu Sans Condensed','DejaVu Sans','Liberation Sans',sans-serif;height:40px;line-height:40px;letter-spacing:-0.20px;-webkit-text-stroke:0.3px #000">Stocks article par dépôt [3]</div>
<div class="" style="left:42.0px;top:1491.0px;width:33.5px;height:38.5px;background:linear-gradient(#fff,#fbfbfb 40%,#ececec);border-right:2px solid #5a5a5a;border-bottom:2.5px solid #7a7a7a;"><div style="position:absolute;left:0;top:0;bottom:0;right:3.5px;overflow:hidden"><div class="t" style="position:absolute;left:5.5px;top:2px;line-height:38px;"></div></div></div>
<div class="" style="left:75.5px;top:1491.0px;width:142.0px;height:38.5px;background:linear-gradient(#fff,#fbfbfb 40%,#ececec);border-right:2px solid #8a8a8a;border-bottom:2.5px solid #7a7a7a;overflow:hidden;"><div style="position:absolute;left:0;top:0;bottom:0;right:3.5px;overflow:hidden"><div class="t" style="position:absolute;left:5.5px;top:2px;font:condensed 23.3px 'DejaVu Sans Condensed','DejaVu Sans','Liberation Sans',sans-serif;letter-spacing:-0.04px;-webkit-text-stroke:0.3px;line-height:38px;">Dépôt</div></div><svg style="position:absolute;right:0;top:2px" width="14" height="13" viewBox="0 0 14 13"><path d="M0 0 H14 V13 Z" fill="#000"/></svg></div>
<div class="" style="left:217.5px;top:1491.0px;width:379.0px;height:38.5px;background:linear-gradient(#fff,#fbfbfb 40%,#ececec);border-right:2px solid #8a8a8a;border-bottom:2.5px solid #7a7a7a;overflow:hidden;"><div style="position:absolute;left:0;top:0;bottom:0;right:3.5px;overflow:hidden"><div class="t" style="position:absolute;left:5.5px;top:2px;font:condensed 23.3px 'DejaVu Sans Condensed','DejaVu Sans','Liberation Sans',sans-serif;letter-spacing:-0.04px;-webkit-text-stroke:0.3px;line-height:38px;">Dépôt</div></div></div>
<div class="" style="left:596.5px;top:1491.0px;width:143.0px;height:38.5px;background:linear-gradient(#fff,#fbfbfb 40%,#ececec);border-right:2px solid #8a8a8a;border-bottom:2.5px solid #7a7a7a;overflow:hidden;"><div style="position:absolute;left:0;top:0;bottom:0;right:3.5px;overflow:hidden"><div class="t" style="position:absolute;left:5.5px;top:2px;font:condensed 23.3px 'DejaVu Sans Condensed','DejaVu Sans','Liberation Sans',sans-serif;letter-spacing:-0.25px;-webkit-text-stroke:0.3px;line-height:38px;">Stock actuel</div></div><svg style="position:absolute;right:0;top:2px" width="14" height="13" viewBox="0 0 14 13"><path d="M0 0 H14 V13 Z" fill="#000"/></svg></div>
<div class="" style="left:739.5px;top:1491.0px;width:142.0px;height:38.5px;background:linear-gradient(#fff,#fbfbfb 40%,#ececec);border-right:2px solid #8a8a8a;border-bottom:2.5px solid #7a7a7a;overflow:hidden;"><div style="position:absolute;left:0;top:0;bottom:0;right:3.5px;overflow:hidden"><div class="t" style="position:absolute;left:5.5px;top:2px;font:condensed 23.3px 'DejaVu Sans Condensed','DejaVu Sans','Liberation Sans',sans-serif;letter-spacing:-0.05px;-webkit-text-stroke:0.3px;line-height:38px;">2 - Allocation</div></div></div>
<div class="" style="left:881.5px;top:1491.0px;width:142.0px;height:38.5px;background:linear-gradient(#fff,#fbfbfb 40%,#ececec);border-right:2px solid #8a8a8a;border-bottom:2.5px solid #7a7a7a;overflow:hidden;"><div style="position:absolute;left:0;top:0;bottom:0;right:3.5px;overflow:hidden"><div class="t" style="position:absolute;left:5.5px;top:2px;font:condensed 23.3px 'DejaVu Sans Condensed','DejaVu Sans','Liberation Sans',sans-serif;letter-spacing:-0.05px;-webkit-text-stroke:0.3px;line-height:38px;">3 - Résa et M</div></div></div>
<div class="" style="left:1023.5px;top:1491.0px;width:143.0px;height:38.5px;background:linear-gradient(#fff,#fbfbfb 40%,#ececec);border-right:2px solid #8a8a8a;border-bottom:2.5px solid #7a7a7a;overflow:hidden;"><div style="position:absolute;left:0;top:0;bottom:0;right:3.5px;overflow:hidden"><div class="t" style="position:absolute;left:5.5px;top:2px;font:condensed 23.3px 'DejaVu Sans Condensed','DejaVu Sans','Liberation Sans',sans-serif;letter-spacing:-0.05px;-webkit-text-stroke:0.3px;line-height:38px;">4 - Command</div></div></div>
<div class="" style="left:1166.5px;top:1491.0px;width:141.0px;height:38.5px;background:linear-gradient(#fff,#fbfbfb 40%,#ececec);border-right:2px solid #8a8a8a;border-bottom:2.5px solid #7a7a7a;overflow:hidden;"><div style="position:absolute;left:0;top:0;bottom:0;right:3.5px;overflow:hidden"><div class="t" style="position:absolute;left:5.5px;top:2px;font:condensed 23.3px 'DejaVu Sans Condensed','DejaVu Sans','Liberation Sans',sans-serif;letter-spacing:-0.05px;-webkit-text-stroke:0.3px;line-height:38px;">5 - Besoin en</div></div></div>
<div class="" style="left:1307.5px;top:1491.0px;width:143.0px;height:38.5px;background:linear-gradient(#fff,#fbfbfb 40%,#ececec);border-right:2px solid #8a8a8a;border-bottom:2.5px solid #7a7a7a;overflow:hidden;"><div style="position:absolute;left:0;top:0;bottom:0;right:3.5px;overflow:hidden"><div class="t" style="position:absolute;left:5.5px;top:2px;font:condensed 23.3px 'DejaVu Sans Condensed','DejaVu Sans','Liberation Sans',sans-serif;letter-spacing:-0.05px;-webkit-text-stroke:0.3px;line-height:38px;">6 - Dispo. ve</div></div></div>
<div class="" style="left:1450.5px;top:1491.0px;width:142.0px;height:38.5px;background:linear-gradient(#fff,#fbfbfb 40%,#ececec);border-right:2px solid #8a8a8a;border-bottom:2.5px solid #7a7a7a;overflow:hidden;"><div style="position:absolute;left:0;top:0;bottom:0;right:3.5px;overflow:hidden"><div class="t" style="position:absolute;left:5.5px;top:2px;font:condensed 23.3px 'DejaVu Sans Condensed','DejaVu Sans','Liberation Sans',sans-serif;letter-spacing:-0.05px;-webkit-text-stroke:0.3px;line-height:38px;">7 - Fabricatio</div></div></div>
<div class="" style="left:1592.5px;top:1491.0px;width:142.0px;height:38.5px;background:linear-gradient(#fff,#fbfbfb 40%,#ececec);border-right:2px solid #8a8a8a;border-bottom:2.5px solid #7a7a7a;overflow:hidden;"><div style="position:absolute;left:0;top:0;bottom:0;right:3.5px;overflow:hidden"><div class="t" style="position:absolute;left:5.5px;top:2px;font:condensed 23.3px 'DejaVu Sans Condensed','DejaVu Sans','Liberation Sans',sans-serif;letter-spacing:-0.12px;-webkit-text-stroke:0.3px;line-height:38px;">8 - Achat Vin</div></div></div>
<div class="" style="left:1734.5px;top:1491.0px;width:142.0px;height:38.5px;background:linear-gradient(#fff,#fbfbfb 40%,#ececec);border-right:2px solid #8a8a8a;border-bottom:2.5px solid #7a7a7a;overflow:hidden;"><div style="position:absolute;left:0;top:0;bottom:0;right:3.5px;overflow:hidden"><div class="t" style="position:absolute;left:5.5px;top:2px;font:condensed 23.3px 'DejaVu Sans Condensed','DejaVu Sans','Liberation Sans',sans-serif;letter-spacing:0.23px;-webkit-text-stroke:0.3px;line-height:38px;">9 - OA</div></div></div>
<div class="" style="left:1876.5px;top:1491.0px;width:142.5px;height:38.5px;background:linear-gradient(#fff,#fbfbfb 40%,#ececec);border-right:2px solid #8a8a8a;border-bottom:2.5px solid #7a7a7a;overflow:hidden;"><div style="position:absolute;left:0;top:0;bottom:0;right:0px;overflow:hidden"><div class="t" style="position:absolute;left:7px;top:2px;font:condensed 23.3px 'DejaVu Sans Condensed','DejaVu Sans','Liberation Sans',sans-serif;letter-spacing:-0.14px;-webkit-text-stroke:0.3px;line-height:38px;">10 - Dispo. g</div></div></div>
<div class="" style="left:42.0px;top:1529.5px;width:33.5px;height:36.5px;background:#f4f4f4;border-right:2px solid #5a5a5a;border-bottom:2px solid #6a6a6a;"><svg style="position:absolute;left:12px;top:5px" width="14" height="25" viewBox="0 0 14 25"><path d="M0 0 L14 12.5 L0 25 Z" fill="#000"/></svg></div>
<div class="" style="left:75.5px;top:1529.5px;width:142.0px;height:36.5px;background:#ffffe1;border-right:2px solid #c4c4c4;border-bottom:2px solid #c4c4c4;overflow:hidden;"><div class="t" style="position:absolute;left:5.5px;top:0.5px;font:condensed 23.3px 'DejaVu Sans Condensed','DejaVu Sans','Liberation Sans',sans-serif;letter-spacing:-1.40px;-webkit-text-stroke:0.3px;line-height:36px;color:#a00000">ADV</div></div>
<div class="" style="left:217.5px;top:1529.5px;width:379.0px;height:36.5px;background:#e4e4e4;border-right:2px solid #c4c4c4;border-bottom:2px solid #c4c4c4;overflow:hidden;"><div class="t" style="position:absolute;left:5.5px;top:0.5px;font:condensed 23.3px 'DejaVu Sans Condensed','DejaVu Sans','Liberation Sans',sans-serif;letter-spacing:0.48px;-webkit-text-stroke:0.3px;line-height:36px;color:#000">ADV PRINCI</div></div>
<div class="" style="left:596.5px;top:1529.5px;width:143.0px;height:36.5px;background:#fff;border-right:2px solid #c4c4c4;border-bottom:2px solid #c4c4c4;overflow:hidden;"><div class="t" style="position:absolute;right:6.5px;top:0.5px;font:condensed 23.3px 'DejaVu Sans Condensed','DejaVu Sans','Liberation Sans',sans-serif;letter-spacing:-0.67px;-webkit-text-stroke:0.3px;line-height:36px;color:#000">41539</div></div>
<div class="" style="left:739.5px;top:1529.5px;width:142.0px;height:36.5px;background:#fff;border-right:2px solid #c4c4c4;border-bottom:2px solid #c4c4c4;overflow:hidden;"></div>
<div class="" style="left:881.5px;top:1529.5px;width:142.0px;height:36.5px;background:#fff;border-right:2px solid #c4c4c4;border-bottom:2px solid #c4c4c4;overflow:hidden;"></div>
<div class="" style="left:1023.5px;top:1529.5px;width:143.0px;height:36.5px;background:#fff;border-right:2px solid #c4c4c4;border-bottom:2px solid #c4c4c4;overflow:hidden;"></div>
<div class="" style="left:1166.5px;top:1529.5px;width:141.0px;height:36.5px;background:#fff;border-right:2px solid #c4c4c4;border-bottom:2px solid #c4c4c4;overflow:hidden;"></div>
<div class="" style="left:1307.5px;top:1529.5px;width:143.0px;height:36.5px;background:#fff;border-right:2px solid #c4c4c4;border-bottom:2px solid #c4c4c4;overflow:hidden;"><div class="t" style="position:absolute;right:6.5px;top:0.5px;font:condensed 23.3px 'DejaVu Sans Condensed','DejaVu Sans','Liberation Sans',sans-serif;letter-spacing:-0.67px;-webkit-text-stroke:0.3px;line-height:36px;color:#000">41539</div></div>
<div class="" style="left:1450.5px;top:1529.5px;width:142.0px;height:36.5px;background:#fff;border-right:2px solid #c4c4c4;border-bottom:2px solid #c4c4c4;overflow:hidden;"></div>
<div class="" style="left:1592.5px;top:1529.5px;width:142.0px;height:36.5px;background:#fff;border-right:2px solid #c4c4c4;border-bottom:2px solid #c4c4c4;overflow:hidden;"></div>
<div class="" style="left:1734.5px;top:1529.5px;width:142.0px;height:36.5px;background:#fff;border-right:2px solid #c4c4c4;border-bottom:2px solid #c4c4c4;overflow:hidden;"></div>
<div class="" style="left:1876.5px;top:1529.5px;width:142.5px;height:36.5px;background:#fff;border-right:2px solid #c4c4c4;border-bottom:2px solid #c4c4c4;overflow:hidden;"><div class="t" style="position:absolute;right:6.5px;top:0.5px;font:condensed 23.3px 'DejaVu Sans Condensed','DejaVu Sans','Liberation Sans',sans-serif;letter-spacing:-0.67px;-webkit-text-stroke:0.3px;line-height:36px;color:#000">41539</div></div>
<div class="" style="left:42.0px;top:1566.0px;width:33.5px;height:36.5px;background:#f4f4f4;border-right:2px solid #5a5a5a;border-bottom:2px solid #6a6a6a;"></div>
<div class="" style="left:75.5px;top:1566.0px;width:142.0px;height:36.5px;background:#fff;border-right:2px solid #c4c4c4;border-bottom:2px solid #c4c4c4;overflow:hidden;"><div class="t" style="position:absolute;left:5.5px;top:0.5px;font:condensed 23.3px 'DejaVu Sans Condensed','DejaVu Sans','Liberation Sans',sans-serif;letter-spacing:-0.80px;-webkit-text-stroke:0.3px;line-height:36px;color:#000">ADV2</div></div>
<div class="" style="left:217.5px;top:1566.0px;width:379.0px;height:36.5px;background:#e4e4e4;border-right:2px solid #c4c4c4;border-bottom:2px solid #c4c4c4;overflow:hidden;"><div class="t" style="position:absolute;left:5.5px;top:0.5px;font:condensed 23.3px 'DejaVu Sans Condensed','DejaVu Sans','Liberation Sans',sans-serif;letter-spacing:-0.53px;-webkit-text-stroke:0.3px;line-height:36px;color:#000">GENLD2</div></div>
<div class="" style="left:596.5px;top:1566.0px;width:143.0px;height:36.5px;background:#fff;border-right:2px solid #c4c4c4;border-bottom:2px solid #c4c4c4;overflow:hidden;"><div class="t" style="position:absolute;right:6.5px;top:0.5px;font:condensed 23.3px 'DejaVu Sans Condensed','DejaVu Sans','Liberation Sans',sans-serif;letter-spacing:-0.62px;-webkit-text-stroke:0.3px;line-height:36px;color:#000">19500</div></div>
<div class="" style="left:739.5px;top:1566.0px;width:142.0px;height:36.5px;background:#fff;border-right:2px solid #c4c4c4;border-bottom:2px solid #c4c4c4;overflow:hidden;"></div>
<div class="" style="left:881.5px;top:1566.0px;width:142.0px;height:36.5px;background:#fff;border-right:2px solid #c4c4c4;border-bottom:2px solid #c4c4c4;overflow:hidden;"></div>
<div class="" style="left:1023.5px;top:1566.0px;width:143.0px;height:36.5px;background:#fff;border-right:2px solid #c4c4c4;border-bottom:2px solid #c4c4c4;overflow:hidden;"></div>
<div class="" style="left:1166.5px;top:1566.0px;width:141.0px;height:36.5px;background:#fff;border-right:2px solid #c4c4c4;border-bottom:2px solid #c4c4c4;overflow:hidden;"></div>
<div class="" style="left:1307.5px;top:1566.0px;width:143.0px;height:36.5px;background:#fff;border-right:2px solid #c4c4c4;border-bottom:2px solid #c4c4c4;overflow:hidden;"><div class="t" style="position:absolute;right:6.5px;top:0.5px;font:condensed 23.3px 'DejaVu Sans Condensed','DejaVu Sans','Liberation Sans',sans-serif;letter-spacing:-0.62px;-webkit-text-stroke:0.3px;line-height:36px;color:#000">19500</div></div>
<div class="" style="left:1450.5px;top:1566.0px;width:142.0px;height:36.5px;background:#fff;border-right:2px solid #c4c4c4;border-bottom:2px solid #c4c4c4;overflow:hidden;"></div>
<div class="" style="left:1592.5px;top:1566.0px;width:142.0px;height:36.5px;background:#fff;border-right:2px solid #c4c4c4;border-bottom:2px solid #c4c4c4;overflow:hidden;"></div>
<div class="" style="left:1734.5px;top:1566.0px;width:142.0px;height:36.5px;background:#fff;border-right:2px solid #c4c4c4;border-bottom:2px solid #c4c4c4;overflow:hidden;"></div>
<div class="" style="left:1876.5px;top:1566.0px;width:142.5px;height:36.5px;background:#fff;border-right:2px solid #c4c4c4;border-bottom:2px solid #c4c4c4;overflow:hidden;"><div class="t" style="position:absolute;right:6.5px;top:0.5px;font:condensed 23.3px 'DejaVu Sans Condensed','DejaVu Sans','Liberation Sans',sans-serif;letter-spacing:-0.62px;-webkit-text-stroke:0.3px;line-height:36px;color:#000">19500</div></div>
<div class="" style="left:42.0px;top:1602.5px;width:33.5px;height:36.5px;background:#f4f4f4;border-right:2px solid #5a5a5a;border-bottom:2px solid #6a6a6a;"></div>
<div class="" style="left:75.5px;top:1602.5px;width:142.0px;height:36.5px;background:#fff;border-right:2px solid #c4c4c4;border-bottom:2px solid #c4c4c4;overflow:hidden;"><div class="t" style="position:absolute;left:5.5px;top:0.5px;font:condensed 23.3px 'DejaVu Sans Condensed','DejaVu Sans','Liberation Sans',sans-serif;letter-spacing:0.85px;-webkit-text-stroke:0.3px;line-height:36px;color:#000">CHAI_G</div></div>
<div class="" style="left:217.5px;top:1602.5px;width:379.0px;height:36.5px;background:#e4e4e4;border-right:2px solid #c4c4c4;border-bottom:2px solid #c4c4c4;overflow:hidden;"><div class="t" style="position:absolute;left:5.5px;top:0.5px;font:condensed 23.3px 'DejaVu Sans Condensed','DejaVu Sans','Liberation Sans',sans-serif;letter-spacing:-0.16px;-webkit-text-stroke:0.3px;line-height:36px;color:#000">CHAI GSPK</div></div>
<div class="" style="left:596.5px;top:1602.5px;width:143.0px;height:36.5px;background:#fff;border-right:2px solid #c4c4c4;border-bottom:2px solid #c4c4c4;overflow:hidden;"><div class="t" style="position:absolute;right:6.5px;top:0.5px;font:condensed 23.3px 'DejaVu Sans Condensed','DejaVu Sans','Liberation Sans',sans-serif;letter-spacing:-0.34px;-webkit-text-stroke:0.3px;line-height:36px;color:#000">4867</div></div>
<div class="" style="left:739.5px;top:1602.5px;width:142.0px;height:36.5px;background:#fff;border-right:2px solid #c4c4c4;border-bottom:2px solid #c4c4c4;overflow:hidden;"></div>
<div class="" style="left:881.5px;top:1602.5px;width:142.0px;height:36.5px;background:#fff;border-right:2px solid #c4c4c4;border-bottom:2px solid #c4c4c4;overflow:hidden;"></div>
<div class="" style="left:1023.5px;top:1602.5px;width:143.0px;height:36.5px;background:#fff;border-right:2px solid #c4c4c4;border-bottom:2px solid #c4c4c4;overflow:hidden;"></div>
<div class="" style="left:1166.5px;top:1602.5px;width:141.0px;height:36.5px;background:#fff;border-right:2px solid #c4c4c4;border-bottom:2px solid #c4c4c4;overflow:hidden;"></div>
<div class="" style="left:1307.5px;top:1602.5px;width:143.0px;height:36.5px;background:#fff;border-right:2px solid #c4c4c4;border-bottom:2px solid #c4c4c4;overflow:hidden;"><div class="t" style="position:absolute;right:6.5px;top:0.5px;font:condensed 23.3px 'DejaVu Sans Condensed','DejaVu Sans','Liberation Sans',sans-serif;letter-spacing:-0.34px;-webkit-text-stroke:0.3px;line-height:36px;color:#000">4867</div></div>
<div class="" style="left:1450.5px;top:1602.5px;width:142.0px;height:36.5px;background:#fff;border-right:2px solid #c4c4c4;border-bottom:2px solid #c4c4c4;overflow:hidden;"></div>
<div class="" style="left:1592.5px;top:1602.5px;width:142.0px;height:36.5px;background:#fff;border-right:2px solid #c4c4c4;border-bottom:2px solid #c4c4c4;overflow:hidden;"></div>
<div class="" style="left:1734.5px;top:1602.5px;width:142.0px;height:36.5px;background:#fff;border-right:2px solid #c4c4c4;border-bottom:2px solid #c4c4c4;overflow:hidden;"></div>
<div class="" style="left:1876.5px;top:1602.5px;width:142.5px;height:36.5px;background:#fff;border-right:2px solid #c4c4c4;border-bottom:2px solid #c4c4c4;overflow:hidden;"><div class="t" style="position:absolute;right:6.5px;top:0.5px;font:condensed 23.3px 'DejaVu Sans Condensed','DejaVu Sans','Liberation Sans',sans-serif;letter-spacing:-0.34px;-webkit-text-stroke:0.3px;line-height:36px;color:#000">4867</div></div>
<div class="" style="left:42.0px;top:1639.0px;width:33.5px;height:36.5px;background:#f4f4f4;border-right:2px solid #5a5a5a;border-bottom:2px solid #6a6a6a;"></div>
<div class="" style="left:75.5px;top:1639.0px;width:142.0px;height:36.5px;background:#fff;border-right:2px solid #c4c4c4;border-bottom:2px solid #c4c4c4;overflow:hidden;"></div>
<div class="" style="left:217.5px;top:1639.0px;width:379.0px;height:36.5px;background:#fff;border-right:2px solid #c4c4c4;border-bottom:2px solid #c4c4c4;overflow:hidden;"></div>
<div class="" style="left:596.5px;top:1639.0px;width:143.0px;height:36.5px;background:#fff;border-right:2px solid #c4c4c4;border-bottom:2px solid #c4c4c4;overflow:hidden;"></div>
<div class="" style="left:739.5px;top:1639.0px;width:142.0px;height:36.5px;background:#fff;border-right:2px solid #c4c4c4;border-bottom:2px solid #c4c4c4;overflow:hidden;"></div>
<div class="" style="left:881.5px;top:1639.0px;width:142.0px;height:36.5px;background:#fff;border-right:2px solid #c4c4c4;border-bottom:2px solid #c4c4c4;overflow:hidden;"></div>
<div class="" style="left:1023.5px;top:1639.0px;width:143.0px;height:36.5px;background:#fff;border-right:2px solid #c4c4c4;border-bottom:2px solid #c4c4c4;overflow:hidden;"></div>
<div class="" style="left:1166.5px;top:1639.0px;width:141.0px;height:36.5px;background:#fff;border-right:2px solid #c4c4c4;border-bottom:2px solid #c4c4c4;overflow:hidden;"></div>
<div class="" style="left:1307.5px;top:1639.0px;width:143.0px;height:36.5px;background:#fff;border-right:2px solid #c4c4c4;border-bottom:2px solid #c4c4c4;overflow:hidden;"></div>
<div class="" style="left:1450.5px;top:1639.0px;width:142.0px;height:36.5px;background:#fff;border-right:2px solid #c4c4c4;border-bottom:2px solid #c4c4c4;overflow:hidden;"></div>
<div class="" style="left:1592.5px;top:1639.0px;width:142.0px;height:36.5px;background:#fff;border-right:2px solid #c4c4c4;border-bottom:2px solid #c4c4c4;overflow:hidden;"></div>
<div class="" style="left:1734.5px;top:1639.0px;width:142.0px;height:36.5px;background:#fff;border-right:2px solid #c4c4c4;border-bottom:2px solid #c4c4c4;overflow:hidden;"></div>
<div class="" style="left:1876.5px;top:1639.0px;width:142.5px;height:36.5px;background:#fff;border-right:2px solid #c4c4c4;border-bottom:2px solid #c4c4c4;overflow:hidden;"></div>
<div class="" style="left:36.0px;top:1751.0px;width:2048.0px;height:159.0px;border-top:2px solid #fff;border-left:2px solid #fff;border-right:3px solid #a2a2a2;border-bottom:3px solid #9c9c9c;background:#f7f1fc;"></div>
<div class="t" style="left:57.1px;top:1758.0px;font:condensed 23.3px 'DejaVu Sans Condensed','DejaVu Sans','Liberation Sans',sans-serif;letter-spacing:-0.44px;-webkit-text-stroke:0.3px #000;height:40px;line-height:40px;">Stock</div>
<div class="inp" style="left:317.0px;top:1762.5px;width:344.8px;height:42.8px;background:#fff;"><span class="iv" style="font:condensed 23.3px 'DejaVu Sans Condensed','DejaVu Sans','Liberation Sans',sans-serif;-webkit-text-stroke:0.3px;line-height:40.3px;letter-spacing:-0.19px;left:3.3px">65906,0000</span></div>
<div class="t" style="left:56.5px;top:1805.0px;font:condensed 23.3px 'DejaVu Sans Condensed','DejaVu Sans','Liberation Sans',sans-serif;letter-spacing:-0.35px;-webkit-text-stroke:0.3px #000;height:40px;line-height:40px;">Besoins</div>
<div class="inp" style="left:317.0px;top:1810.0px;width:344.8px;height:42.8px;background:#fff;"><span class="iv" style="font:condensed 23.3px 'DejaVu Sans Condensed','DejaVu Sans','Liberation Sans',sans-serif;-webkit-text-stroke:0.3px;line-height:40.3px;letter-spacing:0.27px;left:3.4px">0,00</span></div>
<div class="t" style="left:57.1px;top:1852.5px;font:condensed 23.3px 'DejaVu Sans Condensed','DejaVu Sans','Liberation Sans',sans-serif;letter-spacing:-0.24px;-webkit-text-stroke:0.3px #000;height:40px;line-height:40px;">Solde du stock dispo.</div>
<div class="inp" style="left:317.0px;top:1857.0px;width:344.8px;height:43.3px;background:#fff;"><span class="iv" style="font:condensed 23.3px 'DejaVu Sans Condensed','DejaVu Sans','Liberation Sans',sans-serif;-webkit-text-stroke:0.3px;line-height:40.8px;letter-spacing:-0.15px;left:3.3px">65906,00</span></div>
<div class="t" style="left:687.3px;top:1758.0px;font:condensed 23.3px 'DejaVu Sans Condensed','DejaVu Sans','Liberation Sans',sans-serif;letter-spacing:-0.17px;-webkit-text-stroke:0.3px #000;height:40px;line-height:40px;">Achats en cours</div>
<div class="inp" style="left:946.0px;top:1762.5px;width:344.8px;height:42.8px;background:#fff;"><span class="iv" style="font:condensed 23.3px 'DejaVu Sans Condensed','DejaVu Sans','Liberation Sans',sans-serif;-webkit-text-stroke:0.3px;line-height:40.3px;letter-spacing:0.27px;left:3.4px">0,00</span></div>
<div class="t" style="left:685.5px;top:1805.0px;font:condensed 23.3px 'DejaVu Sans Condensed','DejaVu Sans','Liberation Sans',sans-serif;letter-spacing:-0.08px;-webkit-text-stroke:0.3px #000;height:40px;line-height:40px;">Fabrications en cours</div>
<div class="inp" style="left:946.0px;top:1810.0px;width:344.8px;height:42.8px;background:#fff;"><span class="iv" style="font:condensed 23.3px 'DejaVu Sans Condensed','DejaVu Sans','Liberation Sans',sans-serif;-webkit-text-stroke:0.3px;line-height:40.3px;letter-spacing:0.27px;left:3.4px">0,00</span></div>
<div class="t" style="left:686.3px;top:1852.5px;font:condensed 23.3px 'DejaVu Sans Condensed','DejaVu Sans','Liberation Sans',sans-serif;letter-spacing:-0.21px;-webkit-text-stroke:0.3px #000;height:40px;line-height:40px;">Calc. du solde de stock</div>
<div class="inp" style="left:946.0px;top:1857.0px;width:344.8px;height:43.3px;background:#fff;"><span class="iv" style="font:condensed 23.3px 'DejaVu Sans Condensed','DejaVu Sans','Liberation Sans',sans-serif;-webkit-text-stroke:0.3px;line-height:40.8px;letter-spacing:-0.15px;left:3.3px">65906,00</span></div>
</div></body></html>
